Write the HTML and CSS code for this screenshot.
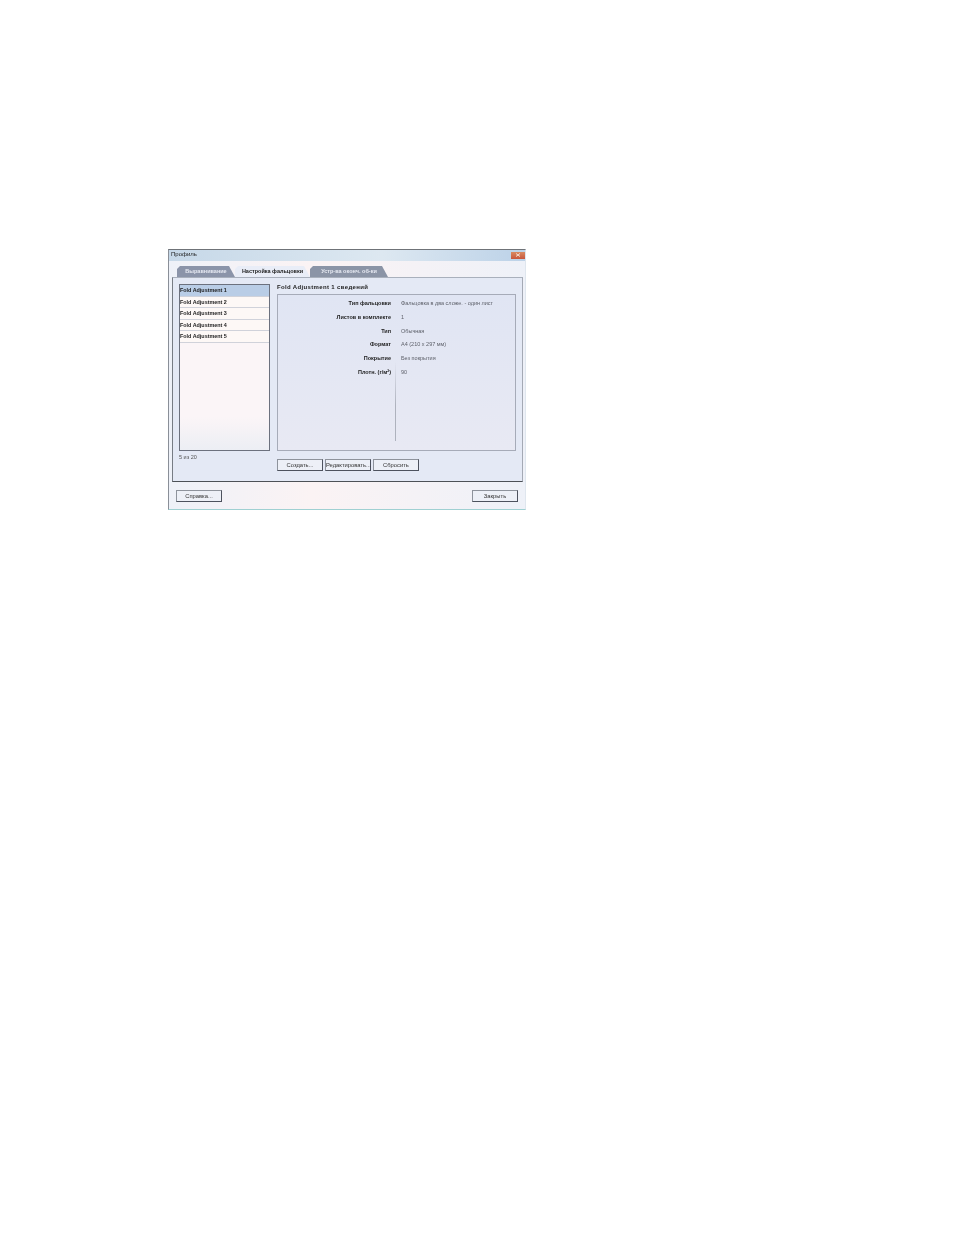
FILE: index.html
```html
<!DOCTYPE html>
<html lang="ru">
<head>
    <meta charset="UTF-8">
    <title>Профиль</title>
    <link rel="stylesheet" href="styles.css">
</head>
<body>
    <div class="window">
        <div class="title-bar">
            <span class="title">Профиль</span>
            <span class="close-btn">
                <svg width="6" height="4" viewBox="0 0 6 4"><path d="M1 0.5l4 3M5 0.5l-4 3" stroke="#f6ddd0" stroke-width="1" fill="none"/></svg>
            </span>
        </div>
        <div class="tabs">
            <div class="tab tab-first">Выравнивание</div>
            <div class="tab tab-active">Настройка фальцовки</div>
            <div class="tab tab-last">Устр-ва оконч. об-ки</div>
        </div>
        <div class="panel">
            <div class="left-col">
                <ul class="list">
                    <li class="selected">Fold Adjustment 1</li>
                    <li>Fold Adjustment 2</li>
                    <li>Fold Adjustment 3</li>
                    <li>Fold Adjustment 4</li>
                    <li>Fold Adjustment 5</li>
                </ul>
                <div class="count">5 из 20</div>
            </div>
            <div class="right-col">
                <div class="details-title">Fold Adjustment 1 сведений</div>
                <div class="details">
                    <div class="labels">
                        <div>Тип фальцовки</div>
                        <div>Листов в комплекте</div>
                        <div>Тип</div>
                        <div>Формат</div>
                        <div>Покрытие</div>
                        <div>Плотн. (г/м²)</div>
                    </div>
                    <div class="values">
                        <div>Фальцовка в два сложе. - один лист</div>
                        <div>1</div>
                        <div>Обычная</div>
                        <div>A4 (210 x 297 мм)</div>
                        <div>Без покрытия</div>
                        <div>90</div>
                    </div>
                </div>
                <div class="actions">
                    <button class="btn">Создать...</button>
                    <button class="btn">Редактировать...</button>
                    <button class="btn">Сбросить</button>
                </div>
            </div>
        </div>
        <div class="footer">
            <button class="btn">Справка...</button>
            <button class="btn">Закрыть</button>
        </div>
    </div>
</body>
</html>
```

FILE: styles.css
```css
body {
    margin: 0;
    background-color: #fff;
    font-family: "Liberation Sans", Arial, sans-serif;
    color: #1c1c1c;
}
.window {
    width: 358px;
    height: 261px;
    margin: 249px 0 0 168px;
    box-sizing: border-box;
    display: flex;
    flex-direction: column;
    background: linear-gradient(90deg, #eef1f8, #fbf3f4 40%, #eef1f8);
    border-left: 1px solid #8a8f98;
    border-right: 1px solid #dfe6ee;
    border-top: 1px solid #6f7378;
    border-bottom: 1px solid #9fd0d2;
    filter: blur(0.4px);
}
.title-bar {
    height: 11px;
    flex: none;
    display: flex;
    justify-content: space-between;
    align-items: center;
    padding: 0 0 0 2px;
    background: linear-gradient(90deg, #c6d8e8, #dde8f1 60%, #bcd2e8);
    font-size: 6px;
    line-height: 9px;
}
.title {
    margin-top: -2px;
}
.close-btn {
    width: 14px;
    height: 7px;
    margin-top: -1px;
    display: flex;
    justify-content: center;
    align-items: center;
    background: linear-gradient(#d98a62, #c8563c);
}
.tabs {
    display: flex;
    height: 11px;
    flex: none;
    margin: 5px 0 0 8px;
    font-size: 5.5px;
    font-weight: bold;
    line-height: 11px;
}
.tab {
    box-sizing: border-box;
    text-align: center;
    clip-path: polygon(0 100%, 0 3px, 3px 0, calc(100% - 6px) 0, 100% 100%);
}
.tab-first {
    width: 58px;
    background-color: #8b94a9;
    color: #e6e9f2;
}
.tab-active {
    width: 75px;
    color: #1c1c1c;
    background-color: #e9edf7;
}
.tab-last {
    width: 78px;
    background-color: #8b94a6;
    color: #e6e9f2;
}
.panel {
    height: 205px;
    flex: none;
    box-sizing: border-box;
    margin: 0 2px 0 3px;
    padding: 6px 6px 0;
    display: flex;
    gap: 7px;
    background-color: #e4e9f5;
    border: 1px solid #6d7278;
    border-color: #a9b0bc #a4a9b4 #4d5157 #777c84;
}
.left-col {
    width: 91px;
    flex: none;
}
.list {
    list-style: none;
    margin: 0;
    padding: 0;
    height: 167px;
    box-sizing: border-box;
    background: linear-gradient(#fbf5f7 80%, #eceef4);
    border: 1px solid #6c717e;
    font-size: 5.4px;
    font-weight: bold;
}
.list li {
    height: 11.6px;
    line-height: 11px;
    box-sizing: border-box;
    border-bottom: 1px solid #d0d2da;
    background-color: #fdf8f6;
}
.list li.selected {
    background-color: #b9cde6;
}
.count {
    margin-top: 3px;
    font-size: 5.5px;
    color: #555;
}
.right-col {
    width: 239px;
    flex: none;
}
.details-title {
    height: 10px;
    line-height: 7px;
    font-size: 6px;
    font-weight: bold;
    letter-spacing: 0.35px;
}
.details {
    height: 157px;
    box-sizing: border-box;
    display: flex;
    padding: 2px 0 0;
    background: linear-gradient(#e0e5f3, #e8e9f3);
    border: 1px solid #a6abb8;
    font-size: 5.5px;
    line-height: 13.8px;
}
.labels {
    width: 117px;
    flex: none;
    text-align: right;
    font-weight: bold;
    padding-right: 4px;
    box-sizing: border-box;
}
.values {
    padding-left: 5px;
    color: #5c5f68;
    height: 144px;
    border-left: 1px solid;
    border-image: linear-gradient(transparent 45%, #aeb2bd 75%) 1;
}
.actions {
    display: flex;
    gap: 2px;
    margin-top: 8px;
}
.btn {
    width: 46px;
    height: 12px;
    padding: 0;
    box-sizing: border-box;
    font-family: inherit;
    font-size: 5.8px;
    color: #333;
    background-color: #edf0f7;
    border: 1px solid #4d525e;
    border-top-color: #8e939c;
    border-left-color: #8e939c;
}
.footer {
    display: flex;
    justify-content: space-between;
    padding: 8px 7px 0;
}
```
